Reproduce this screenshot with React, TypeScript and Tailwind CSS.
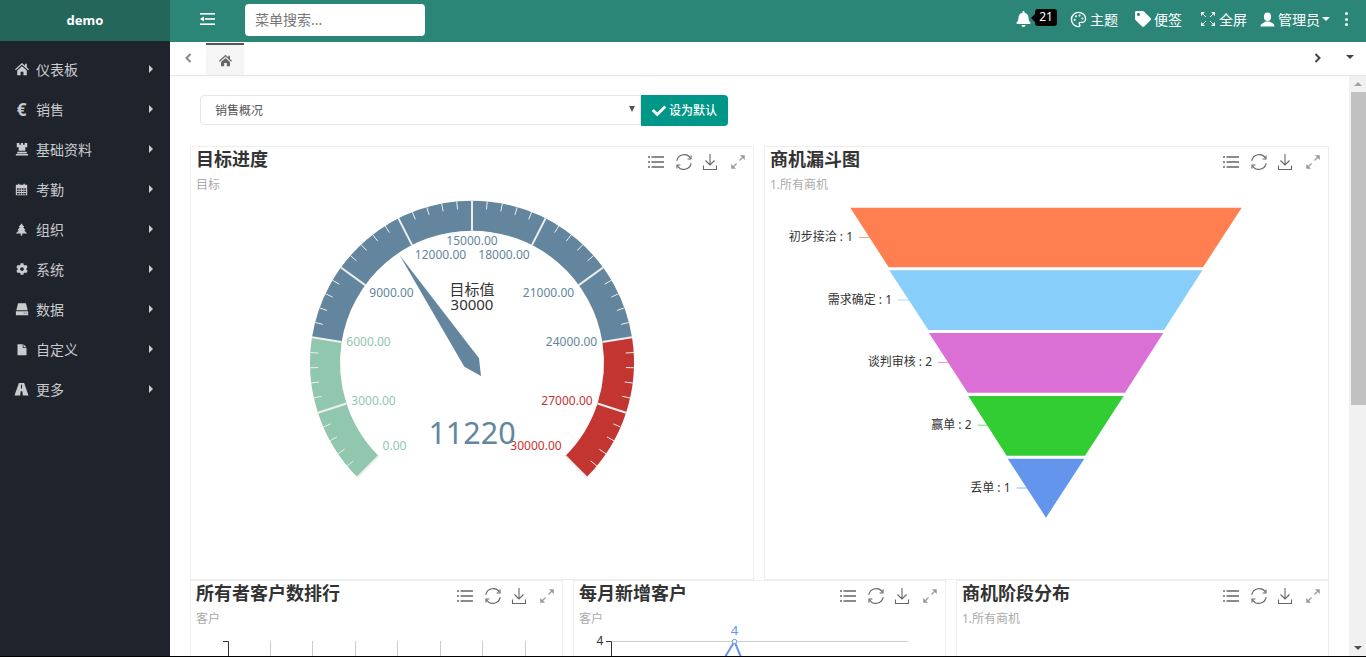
import React from "react";
import { FaCog, FaBell, FaTag, FaCheck } from "react-icons/fa";
import { Palette } from "lucide-react";

function Glyph({ children, className }: { children: React.ReactNode; className?: string }) {
  return (
    <svg className={className} viewBox="0 0 16 16" fill="currentColor">
      {children}
    </svg>
  );
}

function HomeIcon({ className }: { className?: string }) {
  return (
    <Glyph className={className}>
      <path d="M8 1L11.5 4.2V2H13.5V6L16 8.4L15 9.5L8 3.2L1 9.5L0 8.4Z" />
      <path d="M8 4.8L13.5 9.8V15H9.6V11H6.4V15H2.5V9.8Z" />
    </Glyph>
  );
}

const menu: { label: string; icon: React.ReactNode }[] = [
  { label: "仪表板", icon: <HomeIcon className="w-[14px] h-[14px]" /> },
  { label: "销售", icon: <span className="font-bold text-[17px] leading-none">€</span> },
  {
    label: "基础资料",
    icon: (
      <Glyph className="w-[14px] h-[14px]">
        <path d="M2 1H5V3H6.8V1H9.2V3H11V1H14V6H11.8V10H4.2V6H2Z" />
        <path d="M2.5 11H13.5V13H2.5ZM1 13.6H15V15.5H1Z" />
      </Glyph>
    ),
  },
  {
    label: "考勤",
    icon: (
      <Glyph className="w-[13px] h-[13px]">
        <path
          fillRule="evenodd"
          d="M1 2H4V1H5.5V2H10.5V1H12V2H15V15H1ZM2.4 6.5V8.4H4.6V6.5ZM5.5 6.5V8.4H7.5V6.5ZM8.5 6.5V8.4H10.5V6.5ZM11.4 6.5V8.4H13.6V6.5ZM2.4 9.4V11.2H4.6V9.4ZM5.5 9.4V11.2H7.5V9.4ZM8.5 9.4V11.2H10.5V9.4ZM11.4 9.4V11.2H13.6V9.4ZM2.4 12.2V14H4.6V12.2ZM5.5 12.2V14H7.5V12.2ZM8.5 12.2V14H10.5V12.2ZM11.4 12.2V14H13.6V12.2Z"
        />
      </Glyph>
    ),
  },
  {
    label: "组织",
    icon: (
      <Glyph className="w-[13px] h-[13px]">
        <path d="M8 0.5L11.5 5H10L13 9H11.2L15 13H9V15.5H7V13H1L4.8 9H3L6 5H4.5Z" />
      </Glyph>
    ),
  },
  { label: "系统", icon: <FaCog className="w-[12px] h-[12px]" /> },
  {
    label: "数据",
    icon: (
      <Glyph className="w-[14px] h-[14px]">
        <path d="M3.5 1.5H12.5L14.5 9.5H1.5Z" />
        <path
          fillRule="evenodd"
          d="M1 10.5H15V15H1ZM10 12.2V13.2H11V12.2ZM12.2 12.2V13.2H13.2V12.2Z"
        />
      </Glyph>
    ),
  },
  {
    label: "自定义",
    icon: (
      <Glyph className="w-[12px] h-[13px]">
        <path d="M2 1H9V6H14V15.5H2ZM10 1L14 5H10Z" />
      </Glyph>
    ),
  },
  {
    label: "更多",
    icon: (
      <Glyph className="w-[15px] h-[14px]">
        <path
          fillRule="evenodd"
          d="M5 1H11L16 15.5H9.5L9 10.5H7L6.5 15.5H0ZM7.4 3V7.5H8.6V3Z"
        />
      </Glyph>
    ),
  },
];

function Toolbox() {
  return (
    <div className="flex items-start pt-[7px] pr-[7px]">
      <svg width="16" height="16" viewBox="0 0 16 16" fill="none" stroke="#666" strokeWidth="1.3">
        <path d="M0 3H2M3.5 3H16M0 8H2M3.5 8H16M0 13H2M3.5 13H16" />
      </svg>
      <svg className="ml-3" width="16" height="16" viewBox="0 0 16 16" fill="none" stroke="#666" strokeWidth="1.1">
        <path d="M14.6 4.6A7.4 7.4 0 0 0 0.8 6.8" />
        <path d="M15 1.4V5H11.6" />
        <path d="M1.4 11.4A7.4 7.4 0 0 0 15.2 9.2" />
        <path d="M1 14.6V11H4.4" />
      </svg>
      <svg className="ml-[10px]" width="16" height="16" viewBox="0 0 16 16" fill="none" stroke="#666" strokeWidth="1.1">
        <path d="M8 0V10.5M3.5 6.5L8 11L12.5 6.5" />
        <path d="M1.5 11.5V15.5H14.5V11.5" />
      </svg>
      <svg className="ml-3" width="16" height="16" viewBox="0 0 16 16" fill="#999" stroke="#999" strokeWidth="1.2">
        <path d="M9.5 6.5L13 3" fill="none" />
        <path d="M3 13L6.5 9.5" fill="none" />
        <path d="M10.5 1.5H14.5V5.5Z" strokeWidth="0.5" />
        <path d="M1.5 10.5V14.5H5.5Z" strokeWidth="0.5" />
      </svg>
    </div>
  );
}

function Panel({
  title,
  sub,
  children,
}: {
  title: string;
  sub: string;
  children?: React.ReactNode;
}) {
  return (
    <div className="h-[434px] border border-[#eeeeee] bg-white">
      <div className="h-[48px] flex justify-between">
        <div className="pl-[5px]">
          <div className="h-[24px] leading-[24px] text-[18px] font-bold text-[#333333]">{title}</div>
          <div className="mt-[6px] h-4 leading-4 text-[12px] text-[#aaaaaa]">{sub}</div>
        </div>
        <Toolbox />
      </div>
      {children}
    </div>
  );
}

const CX = 472;
const CY = 362.7;
function pt(frac: number, r: number) {
  const a = ((225 - 270 * frac) * Math.PI) / 180;
  return [CX + r * Math.cos(a), CY - r * Math.sin(a)];
}
function arc(f0: number, f1: number) {
  const r = 147;
  const [x0, y0] = pt(f0, r);
  const [x1, y1] = pt(f1, r);
  const large = (f1 - f0) * 270 > 180 ? 1 : 0;
  return `M${x0} ${y0}A${r} ${r} 0 ${large} 1 ${x1} ${y1}`;
}

const gaugeLabels: [string, number, number, string][] = [
  ["0.00", 394.5, 445.5, "#91c7ae"],
  ["3000.00", 373.5, 400, "#91c7ae"],
  ["6000.00", 368.5, 341, "#91c7ae"],
  ["9000.00", 391.5, 292, "#63869e"],
  ["12000.00", 440.5, 254, "#63869e"],
  ["15000.00", 472, 240, "#63869e"],
  ["18000.00", 504, 254, "#63869e"],
  ["21000.00", 548.5, 292, "#63869e"],
  ["24000.00", 571.5, 341, "#63869e"],
  ["27000.00", 567, 400, "#c23531"],
  ["30000.00", 536, 445.5, "#c23531"],
];

function Gauge() {
  const ticks = Array.from({ length: 51 }, (_, i) => i);
  return (
    <svg className="w-[562px] h-[385px]" viewBox="191 195 562 385">
      <path d={arc(0, 0.2)} fill="none" stroke="#91c7ae" strokeWidth="30" />
      <path d={arc(0.2, 0.8)} fill="none" stroke="#63869e" strokeWidth="30" />
      <path d={arc(0.8, 1)} fill="none" stroke="#c23531" strokeWidth="30" />
      {ticks.map((i) => {
        const major = i % 5 === 0;
        const [x0, y0] = pt(i / 50, 162);
        const [x1, y1] = pt(i / 50, major ? 132 : 154);
        return (
          <line
            key={i}
            x1={x0}
            y1={y0}
            x2={x1}
            y2={y1}
            stroke="#eeeeee"
            strokeWidth={major ? 2 : 1}
          />
        );
      })}
      {gaugeLabels.map(([t, x, y, c]) => (
        <text key={t} x={x} y={y} fill={c} fontSize="12" textAnchor="middle" dominantBaseline="central">
          {t}
        </text>
      ))}
      <polygon points="399.5,255 479,358.3 481,376 464.3,366.7" fill="#63869e" />
      <text x={472} y={289} fill="#333" fontSize="15" textAnchor="middle" dominantBaseline="central">
        目标值
      </text>
      <text x={472} y={304} fill="#333" fontSize="15" textAnchor="middle" dominantBaseline="central">
        30000
      </text>
      <text x={472} y={431.5} fill="#63869e" fontSize="30.5" textAnchor="middle" dominantBaseline="central">
        11220
      </text>
    </svg>
  );
}

const funnel: { pts: string; c: string; label: string; end: number; y: number }[] = [
  { pts: "850.3,207.7 1241.7,207.7 1203,267.3 888.7,267.3", c: "#ff7f50", label: "初步接洽 : 1", end: 853, y: 237 },
  { pts: "889.3,270.3 1202.3,270.3 1164,330 928.3,330", c: "#87cefa", label: "需求确定 : 1", end: 892, y: 299.5 },
  { pts: "929,333 1163.3,333 1125,392.7 967.7,392.7", c: "#da70d6", label: "谈判审核 : 2", end: 932, y: 362 },
  { pts: "968.3,396 1123.7,396 1085,455.7 1006.7,455.7", c: "#32cd32", label: "赢单 : 2", end: 971.5, y: 424.7 },
  { pts: "1007.7,458.7 1084.3,458.7 1046,517.7", c: "#6495ed", label: "丢单 : 1", end: 1010.5, y: 487.5 },
];

function Funnel() {
  return (
    <svg className="w-[563px] h-[385px]" viewBox="765 195 563 385">
      {funnel.map((f) => (
        <g key={f.label}>
          <polygon points={f.pts} fill={f.c} />
          <line x1={f.end + 6} x2={f.end + 17} y1={f.y + 0.5} y2={f.y + 0.5} stroke={f.c} strokeOpacity="0.7" />
          <text x={f.end} y={f.y - 0.5} fill="#333" fontSize="12" textAnchor="end" dominantBaseline="central">
            {f.label}
          </text>
        </g>
      ))}
    </svg>
  );
}

function BarChart() {
  const xs = [270.5, 312.5, 355.5, 397.5, 440.5, 482.5, 525.5];
  return (
    <svg className="w-[371px] h-[385px]" viewBox="191 629 371 385">
      {xs.map((x) => (
        <line key={x} x1={x} x2={x} y1={641} y2={700} stroke="#ccc" />
      ))}
      <path d="M223 641.5H228.5V700" fill="none" stroke="#333" />
    </svg>
  );
}

function LineChart() {
  return (
    <svg className="w-[371px] h-[385px] overflow-visible" viewBox="574 629 371 385">
      <line x1={612} x2={908} y1={641.5} y2={641.5} stroke="#ccc" />
      <path d="M606 641.5H611.5V700" fill="none" stroke="#333" />
      <text x={600} y={640} fill="#333" fontSize="12" textAnchor="middle" dominantBaseline="central">
        4
      </text>
      <text x={734.5} y={630} fill="#6495ed" fontSize="13" textAnchor="middle" dominantBaseline="central">
        4
      </text>
      <path d="M722 662L734.5 641.5L743 662" fill="none" stroke="#6495ed" strokeWidth="2" />
      <circle cx={734.5} cy={641.5} r={2.2} fill="#fff" stroke="#6495ed" />
    </svg>
  );
}

export default function App() {
  return (
    <div className="w-full h-[657px] flex flex-col overflow-hidden bg-white font-['Noto_Sans','Noto_Sans_CJK_SC',sans-serif]">
      <div className="flex-1 min-h-0 flex">
        <aside className="w-[170px] shrink-0 bg-[#1f232c] text-[#c9cbce]">
          <div className="h-[41px] bg-[#24665a] flex items-center justify-center text-white text-[13px] font-bold">
            demo
          </div>
          <nav className="pt-2">
            {menu.map((m) => (
              <div key={m.label} className="h-10 flex items-center pl-[14px] text-[14px]">
                <span className="w-[15px] flex justify-center">{m.icon}</span>
                <span className="ml-[7px]">{m.label}</span>
                <span className="ml-auto mr-[17px] w-0 h-0 border-y-[4px] border-y-transparent border-l-[4px] border-l-[#cccccc]" />
              </div>
            ))}
          </nav>
        </aside>
        <main className="flex-1 min-w-0 flex flex-col">
          <header className="h-[42px] shrink-0 bg-[#2b8677] flex items-center pb-1 pl-[30px] text-white text-[14px]">
            <svg width="15" height="12" viewBox="0 0 15 12" fill="#fff">
              <rect x="0" y="0" width="15" height="1.6" />
              <rect x="5" y="5.2" width="10" height="1.6" />
              <rect x="0" y="10.4" width="15" height="1.6" />
              <polygon points="0,6 4,3.6 4,8.4" />
            </svg>
            <input
              placeholder="菜单搜索..."
              className="ml-[30px] mt-[2px] w-[180px] h-8 rounded-sm bg-white px-[10px] pb-[2px] text-[14px] outline-none placeholder:text-[#777777]"
            />
            <FaBell className="ml-auto w-[15px] h-[16px]" />
            <span className="w-0 h-0 border-y-[5px] border-y-transparent border-r-[5px] border-r-black mb-[3px]" />
            <span className="w-[22px] h-[17px] rounded-[3px] bg-black text-[12px] leading-[16px] text-center mb-[3px] -ml-px">
              21
            </span>
            <Palette className="ml-[13px] w-[17px] h-[17px]" strokeWidth={2} />
            <span className="ml-[3px]">主题</span>
            <FaTag className="ml-[17px] w-[16px] h-[16px]" />
            <span className="ml-[3px]">便签</span>
            <svg className="ml-[19px]" width="14" height="14" viewBox="0 0 14 14" fill="#fff" stroke="#fff">
              <path d="M1 1L5 5M13 1L9 5M1 13L5 9M13 13L9 9" fill="none" strokeWidth="1" />
              <path d="M0 0H4L0 4ZM14 0H10L14 4ZM0 14H4L0 10ZM14 14H10L14 10Z" stroke="none" />
            </svg>
            <span className="ml-1">全屏</span>
            <svg className="ml-[13px]" width="15" height="15" viewBox="0 0 16 16" fill="#fff">
              <ellipse cx="8" cy="5" rx="3.8" ry="4.6" />
              <path d="M0.5 15.5C0.5 12 4 11.5 6 10H10C12 11.5 15.5 12 15.5 15.5Z" />
            </svg>
            <span className="ml-[3px]">管理员</span>
            <span className="ml-[2px] w-0 h-0 border-x-[4px] border-x-transparent border-t-[4px] border-t-white" />
            <span className="ml-[15px] mr-[18px] flex flex-col gap-[2.5px]">
              <span className="w-[3px] h-[3px] rounded-full bg-white" />
              <span className="w-[3px] h-[3px] rounded-full bg-white" />
              <span className="w-[3px] h-[3px] rounded-full bg-white" />
            </span>
          </header>
          <div className="h-[34px] shrink-0 flex border-b border-[#e7e7e7] shadow-[0_1px_2px_rgba(0,0,0,0.04)] bg-white">
            <div className="w-9 flex items-center justify-center pb-[2px]">
              <svg width="7" height="10" viewBox="0 0 7 10" fill="none" stroke="#888" strokeWidth="2">
                <path d="M5.5 1L1.5 5L5.5 9" />
              </svg>
            </div>
            <div className="w-[38px] mt-px border-t-2 border-[#555555] bg-[#f5f5f5] flex items-center justify-center">
              <HomeIcon className="w-[13px] h-[13px] text-[#666666]" />
            </div>
            <div className="ml-auto w-[34px] flex items-center justify-center pb-[2px]">
              <svg width="7" height="10" viewBox="0 0 7 10" fill="none" stroke="#444" strokeWidth="2">
                <path d="M1.5 1L5.5 5L1.5 9" />
              </svg>
            </div>
            <div className="w-8 flex items-center justify-center pb-[3px]">
              <span className="w-0 h-0 border-x-[4px] border-x-transparent border-t-[4px] border-t-[#444444]" />
            </div>
          </div>
          <div className="flex-1 min-h-0 flex">
            <div className="flex-1 min-w-0 overflow-hidden px-5 pt-[19px]">
              <div className="flex pl-[10px] h-[31px]">
                <div className="w-[441px] h-[30px] border border-[#e6e6e6] rounded-l-sm flex items-center pl-[14px] pr-[5px] text-[12px] text-[#555555]">
                  <span className="mt-[2px]">销售概况</span>
                  <span className="ml-auto mb-[2px] w-0 h-0 border-x-[3.5px] border-x-transparent border-t-[6px] border-t-[#555555]" />
                </div>
                <button className="w-[87px] h-[31px] bg-[#009688] rounded-r-sm text-white text-[12px] font-medium flex items-center justify-center">
                  <FaCheck className="w-[14px] h-[14px] mr-[3px]" />
                  设为默认
                </button>
              </div>
              <div className="mt-5 grid grid-cols-[564px_565px] gap-x-[10px]">
                <Panel title="目标进度" sub="目标">
                  <Gauge />
                </Panel>
                <Panel title="商机漏斗图" sub="1.所有商机">
                  <Funnel />
                </Panel>
              </div>
              <div className="grid grid-cols-3 gap-x-[10px]">
                <Panel title="所有者客户数排行" sub="客户">
                  <BarChart />
                </Panel>
                <Panel title="每月新增客户" sub="客户">
                  <LineChart />
                </Panel>
                <Panel title="商机阶段分布" sub="1.所有商机" />
              </div>
            </div>
            <div className="w-[17px] shrink-0 bg-[#f1f1f1] flex flex-col items-center">
              <div className="h-4 flex items-center justify-center">
                <span className="w-0 h-0 border-x-[4px] border-x-transparent border-b-[4px] border-b-[#a3a3a3]" />
              </div>
              <div className="w-[15px] ml-[2px] h-[313px] bg-[#c1c1c1]" />
              <div className="flex-1" />
              <div className="h-4 flex items-center justify-center">
                <span className="w-0 h-0 border-x-[4px] border-x-transparent border-t-[4px] border-t-[#505050]" />
              </div>
            </div>
          </div>
        </main>
      </div>
      <div className="h-px shrink-0 bg-black" />
    </div>
  );
}
